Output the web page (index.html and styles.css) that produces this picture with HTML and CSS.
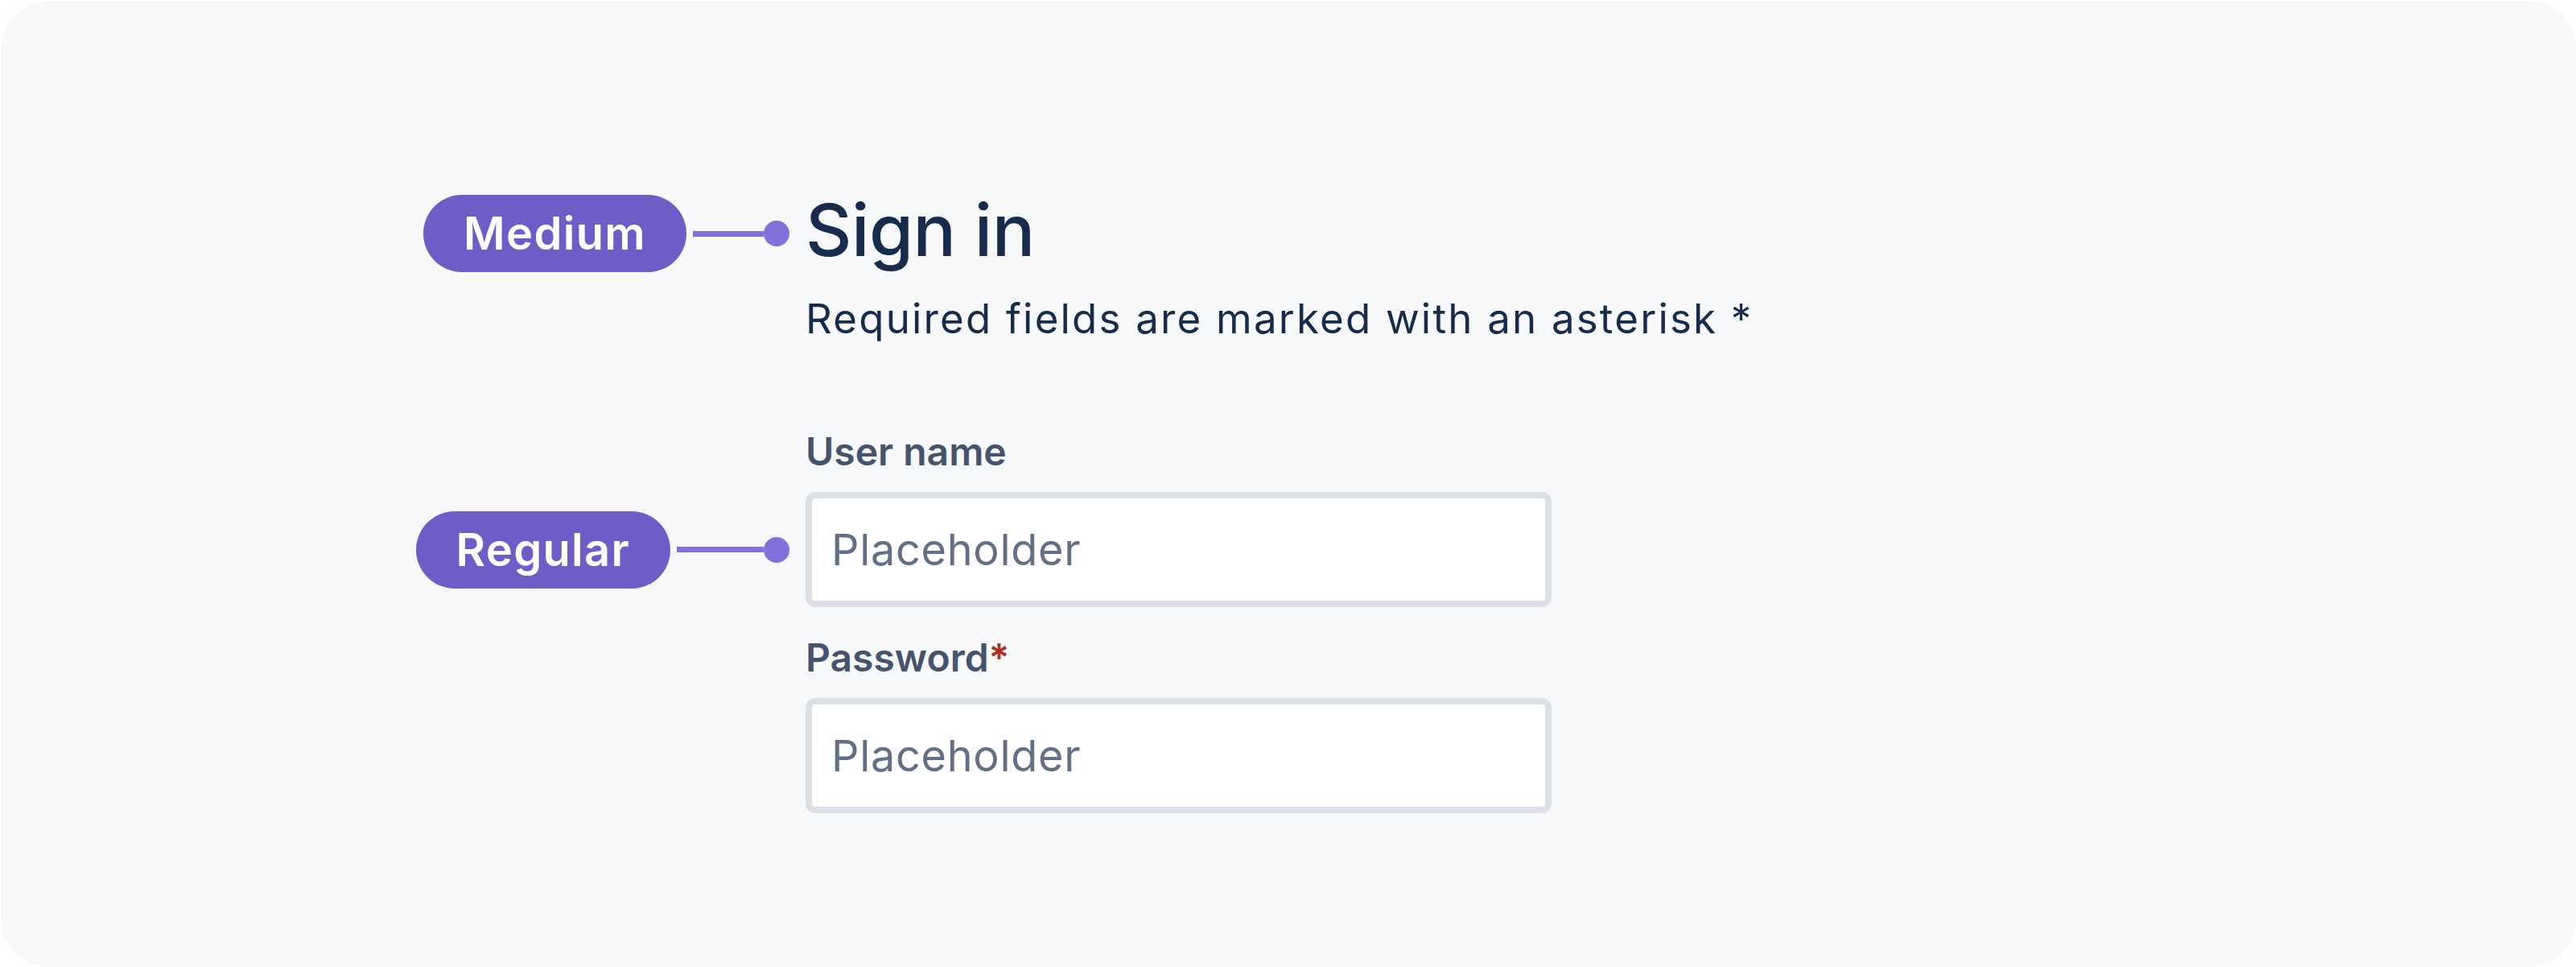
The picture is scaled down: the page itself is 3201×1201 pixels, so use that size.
FILE: index.html
```html
<!DOCTYPE html>
<html lang="en">
<head>
<meta charset="utf-8">
<title>Sign in</title>
<link rel="stylesheet" href="styles.css">
</head>
<body>
<div class="card">
  <div class="form">
    <div class="heading-row">
      <div class="annotation annotation--heading">
        <span class="pill">Medium</span><span class="line line--medium"></span><span class="dot"></span>
      </div>
      <h1 class="title">Sign in</h1>
    </div>
    <p class="subtitle">Required fields are marked with an asterisk *</p>
    <div class="field">
      <label class="label" for="username">User name</label>
      <div class="input-wrap">
        <div class="annotation annotation--field">
          <span class="pill">Regular</span><span class="line line--regular"></span><span class="dot"></span>
        </div>
        <input class="input" id="username" type="text" placeholder="Placeholder">
      </div>
    </div>
    <div class="field field--second">
      <label class="label" for="password">Password<span class="required">*</span></label>
      <div class="input-wrap">
        <input class="input" id="password" type="password" placeholder="Placeholder">
      </div>
    </div>
  </div>
</div>
</body>
</html>
```
FILE: styles.css
```css
* {
  box-sizing: border-box;
}

html, body {
  margin: 0;
  padding: 0;
  background: #ffffff;
  overflow: hidden;
}

body {
  font-family: Inter, "Noto Sans", "Liberation Sans", sans-serif;
}

.card {
  width: 3200px;
  height: 1200px;
  margin: 1px 0 0 1px;
  padding: 235px 0 0 1000px;
  background: #f7f8f9;
  border-radius: 60px;
}

.form {
  display: flex;
  flex-direction: column;
}

.heading-row {
  position: relative;
}

.title {
  margin: 0;
  font-size: 89px;
  line-height: 100px;
  font-weight: 500;
  letter-spacing: -0.5px;
  color: #172b4d;
}

.subtitle {
  margin: 30px 0 0;
  font-size: 51px;
  line-height: 60px;
  font-weight: 400;
  letter-spacing: 2.2px;
  color: #172b4d;
}

.field {
  display: flex;
  flex-direction: column;
  gap: 22px;
  margin-top: 107px;
}

.field--second {
  margin-top: 35px;
}

.label {
  font-size: 48px;
  line-height: 56px;
  font-weight: 600;
  color: #44546f;
}

.required {
  color: #ae2e24;
}

.input-wrap {
  position: relative;
  width: 927px;
}

.input {
  display: block;
  width: 927px;
  height: 143px;
  margin: 0;
  padding: 0 24px;
  border: 8px solid #dcdfe4;
  border-radius: 12px;
  background: #ffffff;
  font-family: Inter, "Noto Sans", "Liberation Sans", sans-serif;
  font-size: 54px;
  letter-spacing: 0.7px;
  color: #172b4d;
  outline: none;
}

.input::placeholder {
  color: #626f86;
  opacity: 1;
}

.annotation {
  position: absolute;
  right: calc(100% + 20px);
  display: flex;
  align-items: center;
}

.annotation--heading {
  top: 6px;
}

.annotation--field {
  top: 50%;
  transform: translateY(-50%);
}

.pill {
  display: flex;
  align-items: center;
  height: 96px;
  padding: 0 50px;
  border-radius: 48px;
  background: #6e5dc6;
  color: #ffffff;
  font-size: 56px;
  font-weight: 600;
  letter-spacing: 1.3px;
  white-space: nowrap;
}

.line {
  height: 7px;
  margin-left: 8px;
  background: #8270db;
}

.line--medium {
  width: 88px;
}

.line--regular {
  width: 108px;
}

.dot {
  width: 32px;
  height: 32px;
  border-radius: 50%;
  background: #8270db;
}
```
